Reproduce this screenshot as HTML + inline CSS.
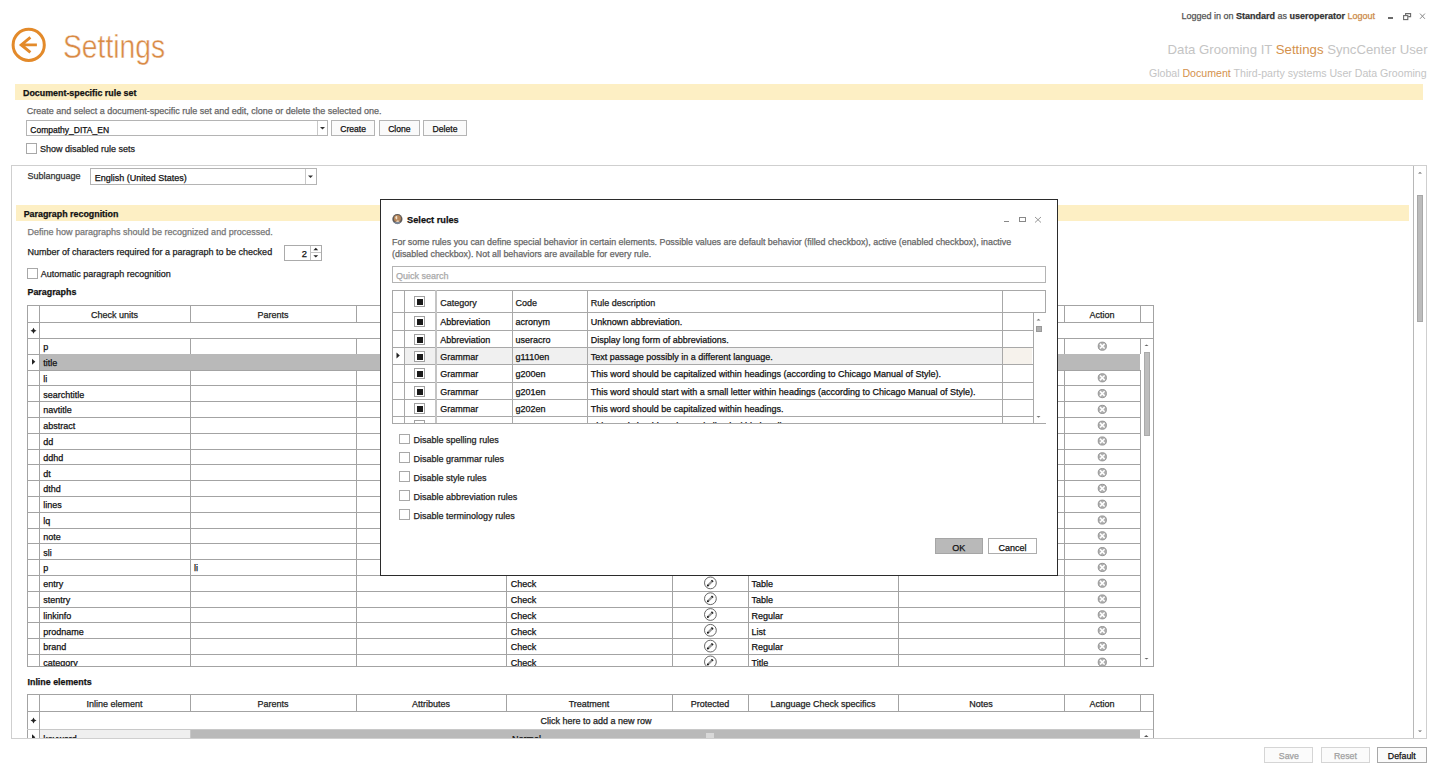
<!DOCTYPE html>
<html><head><meta charset="utf-8"><style>
html,body{margin:0;padding:0;}
body{width:1440px;height:764px;overflow:hidden;position:relative;background:#fff;font-family:"Liberation Sans",sans-serif;}
.t{position:absolute;white-space:pre;-webkit-text-stroke:0.25px currentColor;}
.r{position:absolute;box-sizing:border-box;}
svg{position:absolute;overflow:visible;}
</style></head><body>

<svg style="left:0;top:0" width="80" height="80"><circle cx="28.7" cy="44.9" r="15.6" fill="none" stroke="#e38a2a" stroke-width="3"/><path d="M21.2 44.9 H36.9 M30.4 37.4 L21.2 44.9 L30.4 52.4" fill="none" stroke="#e38a2a" stroke-width="2.9" stroke-linejoin="miter"/></svg>
<div class="t" style="left:62.50px;top:30.99px;font-size:32.5px;line-height:32.5px;font-weight:normal;color:#d98a45;transform:scaleX(0.87);transform-origin:0 0;-webkit-text-stroke:0.45px #fff;">Settings</div>
<div class="t" style="left:1181.40px;top:12.18px;font-size:9px;line-height:9px;font-weight:normal;color:#555;">Logged in on <b style="color:#333">Standard</b> as <b style="color:#333">useroperator</b> <span style="color:#cc8a48">Logout</span></div>
<div class="r" style="left:1388.00px;top:17.00px;width:5.00px;height:1.50px;background:#6a6a6a"></div>
<svg style="left:0;top:0" width="1440" height="30"><rect x="1403.6" y="15.6" width="4.2" height="4" fill="none" stroke="#6a6a6a" stroke-width="1.1"/><path d="M1405.6 15.2 V13.6 H1410.6 V16.6 H1408.2" fill="none" stroke="#6a6a6a" stroke-width="1.1"/><path d="M1420 13.6 L1424.9 18.8 M1424.9 13.6 L1420 18.8" stroke="#888" stroke-width="1"/></svg>
<div class="t" style="left:1167.60px;top:43.33px;font-size:13.2px;line-height:13.2px;font-weight:normal;color:#c4c4c4;-webkit-text-stroke:0;">Data Grooming IT <span style="color:#d4914c">Settings</span> SyncCenter User</div>
<div class="t" style="left:1148.90px;top:68.33px;font-size:10.6px;line-height:10.6px;font-weight:normal;color:#c4c4c4;-webkit-text-stroke:0;">Global <span style="color:#d4914c">Document</span> Third-party systems User Data Grooming</div>
<div class="r" style="left:15.00px;top:84.00px;width:1408.00px;height:16.00px;background:#fdefc4"></div>
<div class="t" style="left:23.00px;top:88.97px;font-size:8.9px;line-height:8.9px;font-weight:bold;color:#111;">Document-specific rule set</div>
<div class="t" style="left:26.70px;top:106.88px;font-size:9px;line-height:9px;font-weight:normal;color:#666;">Create and select a document-specific rule set and edit, clone or delete the selected one.</div>
<div class="r" style="left:26.00px;top:120.00px;width:302.00px;height:16.00px;border:1px solid #b4b4b4;background:#fff"></div>
<div class="r" style="left:316.50px;top:121.00px;width:1.00px;height:14.00px;background:#c8c8c8"></div>
<svg style="left:0;top:0" width="400" height="200"><path d="M320 127 h5 l-2.5 2.5z" fill="#333"/></svg>
<div class="t" style="left:30.30px;top:125.60px;font-size:8.5px;line-height:8.5px;font-weight:normal;color:#111;">Compathy_DITA_EN</div>
<div class="r" style="left:331.00px;top:120.00px;width:44.20px;height:16.00px;border:1px solid #b4b4b4;background:#fafafa"></div>
<div class="t" style="left:153.10px;width:400px;text-align:center;top:124.72px;font-size:8.6px;line-height:8.6px;font-weight:normal;color:#111;">Create</div>
<div class="r" style="left:379.00px;top:120.00px;width:40.80px;height:16.00px;border:1px solid #b4b4b4;background:#fafafa"></div>
<div class="t" style="left:199.40px;width:400px;text-align:center;top:124.72px;font-size:8.6px;line-height:8.6px;font-weight:normal;color:#111;">Clone</div>
<div class="r" style="left:423.00px;top:120.00px;width:44.00px;height:16.00px;border:1px solid #b4b4b4;background:#fafafa"></div>
<div class="t" style="left:245.00px;width:400px;text-align:center;top:124.72px;font-size:8.6px;line-height:8.6px;font-weight:normal;color:#111;">Delete</div>
<div class="r" style="left:26.00px;top:143.00px;width:11.00px;height:11.00px;border:1px solid #a8a8a8;background:#fff"></div>
<div class="t" style="left:40.00px;top:144.88px;font-size:9px;line-height:9px;font-weight:normal;color:#222;">Show disabled rule sets</div>
<div class="r" style="left:11.00px;top:165.00px;width:1415.50px;height:573.50px;border:1px solid #cfcfcf"></div>
<div class="r" style="left:1413.00px;top:166.00px;width:1.00px;height:572.00px;background:#b8b8b8"></div>
<div class="r" style="left:1417.00px;top:195.00px;width:6.00px;height:127.00px;background:#bcbcbc;border:1px solid #a8a8a8"></div>
<svg style="left:0;top:0" width="1440" height="764"><path d="M1418 173.5 h4 l-2 -1.6z" fill="#666"/><path d="M1418 730.5 h4 l-2 1.6z" fill="#666"/></svg>
<div class="t" style="left:27.50px;top:172.18px;font-size:9px;line-height:9px;font-weight:normal;color:#333;">Sublanguage</div>
<div class="r" style="left:90.00px;top:168.00px;width:226.50px;height:16.50px;border:1px solid #b4b4b4;background:#fff"></div>
<div class="r" style="left:304.50px;top:169.00px;width:1.00px;height:14.50px;background:#c8c8c8"></div>
<svg style="left:0;top:0" width="400" height="200"><path d="M308 175.5 h5 l-2.5 2.5z" fill="#333"/></svg>
<div class="t" style="left:94.70px;top:173.98px;font-size:9px;line-height:9px;font-weight:normal;color:#111;">English (United States)</div>
<div class="r" style="left:16.00px;top:205.00px;width:1393.00px;height:16.00px;background:#fdefc4"></div>
<div class="t" style="left:23.70px;top:209.97px;font-size:8.9px;line-height:8.9px;font-weight:bold;color:#111;">Paragraph recognition</div>
<div class="t" style="left:27.50px;top:228.18px;font-size:9px;line-height:9px;font-weight:normal;color:#777;">Define how paragraphs should be recognized and processed.</div>
<div class="t" style="left:27.50px;top:248.18px;font-size:9px;line-height:9px;font-weight:normal;color:#222;">Number of characters required for a paragraph to be checked</div>
<div class="r" style="left:284.00px;top:244.50px;width:38.00px;height:16.30px;border:1px solid #ababab;background:#fff"></div>
<div class="r" style="left:310.00px;top:245.50px;width:1.00px;height:14.50px;background:#c0c0c0"></div>
<div class="r" style="left:310.00px;top:252.00px;width:11.00px;height:1.00px;background:#c4c4c4"></div>
<svg style="left:0;top:0" width="400" height="300"><path d="M313.4 250.2 h4.8 l-2.4 -2.4z" fill="#222"/><path d="M313.4 255.2 h4.8 l-2.4 2.4z" fill="#222"/></svg>
<div class="t" style="left:301.80px;top:248.94px;font-size:9.4px;line-height:9.4px;font-weight:normal;color:#111;">2</div>
<div class="r" style="left:27.00px;top:268.00px;width:11.00px;height:11.00px;border:1px solid #a8a8a8;background:#fff"></div>
<div class="t" style="left:40.80px;top:269.88px;font-size:9px;line-height:9px;font-weight:normal;color:#222;">Automatic paragraph recognition</div>
<div class="t" style="left:27.50px;top:288.27px;font-size:8.9px;line-height:8.9px;font-weight:bold;color:#111;">Paragraphs</div>
<div class="r" style="left:27.00px;top:305.00px;width:1127.00px;height:361.50px;border:1px solid #a3a3a3;background:#fff"></div>
<div class="r" style="left:27.00px;top:322.00px;width:1126.00px;height:1.00px;background:#a3a3a3"></div>
<div class="r" style="left:27.00px;top:338.00px;width:1126.00px;height:1.00px;background:#a3a3a3"></div>
<div class="r" style="left:39.00px;top:305.00px;width:1.00px;height:17.00px;background:#a3a3a3"></div>
<div class="r" style="left:190.00px;top:305.00px;width:1.00px;height:17.00px;background:#a3a3a3"></div>
<div class="r" style="left:356.00px;top:305.00px;width:1.00px;height:17.00px;background:#a3a3a3"></div>
<div class="r" style="left:506.00px;top:305.00px;width:1.00px;height:17.00px;background:#a3a3a3"></div>
<div class="r" style="left:672.00px;top:305.00px;width:1.00px;height:17.00px;background:#a3a3a3"></div>
<div class="r" style="left:748.00px;top:305.00px;width:1.00px;height:17.00px;background:#a3a3a3"></div>
<div class="r" style="left:898.00px;top:305.00px;width:1.00px;height:17.00px;background:#a3a3a3"></div>
<div class="r" style="left:1064.00px;top:305.00px;width:1.00px;height:17.00px;background:#a3a3a3"></div>
<div class="r" style="left:1140.00px;top:305.00px;width:1.00px;height:17.00px;background:#a3a3a3"></div>
<div class="t" style="left:-85.50px;width:400px;text-align:center;top:311.18px;font-size:9px;line-height:9px;font-weight:normal;color:#222;">Check units</div>
<div class="t" style="left:73.00px;width:400px;text-align:center;top:311.18px;font-size:9px;line-height:9px;font-weight:normal;color:#222;">Parents</div>
<div class="t" style="left:231.00px;width:400px;text-align:center;top:311.18px;font-size:9px;line-height:9px;font-weight:normal;color:#222;">Attributes</div>
<div class="t" style="left:389.00px;width:400px;text-align:center;top:311.18px;font-size:9px;line-height:9px;font-weight:normal;color:#222;">Treatment</div>
<div class="t" style="left:510.00px;width:400px;text-align:center;top:311.18px;font-size:9px;line-height:9px;font-weight:normal;color:#222;">Protected</div>
<div class="t" style="left:623.00px;width:400px;text-align:center;top:311.18px;font-size:9px;line-height:9px;font-weight:normal;color:#222;">Language Check specifics</div>
<div class="t" style="left:781.00px;width:400px;text-align:center;top:311.18px;font-size:9px;line-height:9px;font-weight:normal;color:#222;">Notes</div>
<div class="t" style="left:902.00px;width:400px;text-align:center;top:311.18px;font-size:9px;line-height:9px;font-weight:normal;color:#222;">Action</div>
<div class="r" style="left:39.00px;top:322.00px;width:1.00px;height:16.00px;background:#a3a3a3"></div>
<svg style="left:0;top:0" width="1440" height="764"><path d="M33.5 327.8 Q34.1 330.2 36.5 330.8 Q34.1 331.40000000000003 33.5 333.8 Q32.9 331.40000000000003 30.5 330.8 Q32.9 330.2 33.5 327.8Z" fill="#222"/></svg>
<div style="position:absolute;left:0;top:0;width:1440px;height:764px;clip:rect(339px,1440px,665.5px,0px)">
<div class="r" style="left:39.00px;top:338.00px;width:1.00px;height:16.00px;background:#a3a3a3"></div>
<div class="r" style="left:190.00px;top:338.00px;width:1.00px;height:16.00px;background:#a3a3a3"></div>
<div class="r" style="left:356.00px;top:338.00px;width:1.00px;height:16.00px;background:#a3a3a3"></div>
<div class="r" style="left:506.00px;top:338.00px;width:1.00px;height:16.00px;background:#a3a3a3"></div>
<div class="r" style="left:672.00px;top:338.00px;width:1.00px;height:16.00px;background:#a3a3a3"></div>
<div class="r" style="left:748.00px;top:338.00px;width:1.00px;height:16.00px;background:#a3a3a3"></div>
<div class="r" style="left:898.00px;top:338.00px;width:1.00px;height:16.00px;background:#a3a3a3"></div>
<div class="r" style="left:1064.00px;top:338.00px;width:1.00px;height:16.00px;background:#a3a3a3"></div>
<div class="r" style="left:1140.00px;top:338.00px;width:1.00px;height:16.00px;background:#a3a3a3"></div>
<div class="r" style="left:27.00px;top:354.00px;width:1113.00px;height:1.00px;background:#a3a3a3"></div>
<div class="t" style="left:43.30px;top:343.28px;font-size:9px;line-height:9px;font-weight:normal;color:#111;">p</div>
<div class="t" style="left:510.80px;top:343.28px;font-size:9px;line-height:9px;font-weight:normal;color:#111;">Check</div>
<div class="t" style="left:751.50px;top:343.28px;font-size:9px;line-height:9px;font-weight:normal;color:#111;">Regular</div>
<div class="r" style="left:39.00px;top:354.00px;width:1101.00px;height:16.00px;background:#b9b9b9"></div>
<div class="r" style="left:39.00px;top:354.00px;width:1.00px;height:16.00px;background:#a3a3a3"></div>
<div class="r" style="left:27.00px;top:370.00px;width:1113.00px;height:1.00px;background:#a3a3a3"></div>
<div class="t" style="left:43.30px;top:359.08px;font-size:9px;line-height:9px;font-weight:normal;color:#111;">title</div>
<div class="r" style="left:39.00px;top:370.00px;width:1.00px;height:15.00px;background:#a3a3a3"></div>
<div class="r" style="left:190.00px;top:370.00px;width:1.00px;height:15.00px;background:#a3a3a3"></div>
<div class="r" style="left:356.00px;top:370.00px;width:1.00px;height:15.00px;background:#a3a3a3"></div>
<div class="r" style="left:506.00px;top:370.00px;width:1.00px;height:15.00px;background:#a3a3a3"></div>
<div class="r" style="left:672.00px;top:370.00px;width:1.00px;height:15.00px;background:#a3a3a3"></div>
<div class="r" style="left:748.00px;top:370.00px;width:1.00px;height:15.00px;background:#a3a3a3"></div>
<div class="r" style="left:898.00px;top:370.00px;width:1.00px;height:15.00px;background:#a3a3a3"></div>
<div class="r" style="left:1064.00px;top:370.00px;width:1.00px;height:15.00px;background:#a3a3a3"></div>
<div class="r" style="left:1140.00px;top:370.00px;width:1.00px;height:15.00px;background:#a3a3a3"></div>
<div class="r" style="left:27.00px;top:385.00px;width:1113.00px;height:1.00px;background:#a3a3a3"></div>
<div class="t" style="left:43.30px;top:374.88px;font-size:9px;line-height:9px;font-weight:normal;color:#111;">li</div>
<div class="t" style="left:510.80px;top:374.88px;font-size:9px;line-height:9px;font-weight:normal;color:#111;">Check</div>
<div class="t" style="left:751.50px;top:374.88px;font-size:9px;line-height:9px;font-weight:normal;color:#111;">Regular</div>
<div class="r" style="left:39.00px;top:385.00px;width:1.00px;height:16.00px;background:#a3a3a3"></div>
<div class="r" style="left:190.00px;top:385.00px;width:1.00px;height:16.00px;background:#a3a3a3"></div>
<div class="r" style="left:356.00px;top:385.00px;width:1.00px;height:16.00px;background:#a3a3a3"></div>
<div class="r" style="left:506.00px;top:385.00px;width:1.00px;height:16.00px;background:#a3a3a3"></div>
<div class="r" style="left:672.00px;top:385.00px;width:1.00px;height:16.00px;background:#a3a3a3"></div>
<div class="r" style="left:748.00px;top:385.00px;width:1.00px;height:16.00px;background:#a3a3a3"></div>
<div class="r" style="left:898.00px;top:385.00px;width:1.00px;height:16.00px;background:#a3a3a3"></div>
<div class="r" style="left:1064.00px;top:385.00px;width:1.00px;height:16.00px;background:#a3a3a3"></div>
<div class="r" style="left:1140.00px;top:385.00px;width:1.00px;height:16.00px;background:#a3a3a3"></div>
<div class="r" style="left:27.00px;top:401.00px;width:1113.00px;height:1.00px;background:#a3a3a3"></div>
<div class="t" style="left:43.30px;top:390.68px;font-size:9px;line-height:9px;font-weight:normal;color:#111;">searchtitle</div>
<div class="t" style="left:510.80px;top:390.68px;font-size:9px;line-height:9px;font-weight:normal;color:#111;">Check</div>
<div class="t" style="left:751.50px;top:390.68px;font-size:9px;line-height:9px;font-weight:normal;color:#111;">Regular</div>
<div class="r" style="left:39.00px;top:401.00px;width:1.00px;height:16.00px;background:#a3a3a3"></div>
<div class="r" style="left:190.00px;top:401.00px;width:1.00px;height:16.00px;background:#a3a3a3"></div>
<div class="r" style="left:356.00px;top:401.00px;width:1.00px;height:16.00px;background:#a3a3a3"></div>
<div class="r" style="left:506.00px;top:401.00px;width:1.00px;height:16.00px;background:#a3a3a3"></div>
<div class="r" style="left:672.00px;top:401.00px;width:1.00px;height:16.00px;background:#a3a3a3"></div>
<div class="r" style="left:748.00px;top:401.00px;width:1.00px;height:16.00px;background:#a3a3a3"></div>
<div class="r" style="left:898.00px;top:401.00px;width:1.00px;height:16.00px;background:#a3a3a3"></div>
<div class="r" style="left:1064.00px;top:401.00px;width:1.00px;height:16.00px;background:#a3a3a3"></div>
<div class="r" style="left:1140.00px;top:401.00px;width:1.00px;height:16.00px;background:#a3a3a3"></div>
<div class="r" style="left:27.00px;top:417.00px;width:1113.00px;height:1.00px;background:#a3a3a3"></div>
<div class="t" style="left:43.30px;top:406.48px;font-size:9px;line-height:9px;font-weight:normal;color:#111;">navtitle</div>
<div class="t" style="left:510.80px;top:406.48px;font-size:9px;line-height:9px;font-weight:normal;color:#111;">Check</div>
<div class="t" style="left:751.50px;top:406.48px;font-size:9px;line-height:9px;font-weight:normal;color:#111;">Regular</div>
<div class="r" style="left:39.00px;top:417.00px;width:1.00px;height:16.00px;background:#a3a3a3"></div>
<div class="r" style="left:190.00px;top:417.00px;width:1.00px;height:16.00px;background:#a3a3a3"></div>
<div class="r" style="left:356.00px;top:417.00px;width:1.00px;height:16.00px;background:#a3a3a3"></div>
<div class="r" style="left:506.00px;top:417.00px;width:1.00px;height:16.00px;background:#a3a3a3"></div>
<div class="r" style="left:672.00px;top:417.00px;width:1.00px;height:16.00px;background:#a3a3a3"></div>
<div class="r" style="left:748.00px;top:417.00px;width:1.00px;height:16.00px;background:#a3a3a3"></div>
<div class="r" style="left:898.00px;top:417.00px;width:1.00px;height:16.00px;background:#a3a3a3"></div>
<div class="r" style="left:1064.00px;top:417.00px;width:1.00px;height:16.00px;background:#a3a3a3"></div>
<div class="r" style="left:1140.00px;top:417.00px;width:1.00px;height:16.00px;background:#a3a3a3"></div>
<div class="r" style="left:27.00px;top:433.00px;width:1113.00px;height:1.00px;background:#a3a3a3"></div>
<div class="t" style="left:43.30px;top:422.28px;font-size:9px;line-height:9px;font-weight:normal;color:#111;">abstract</div>
<div class="t" style="left:510.80px;top:422.28px;font-size:9px;line-height:9px;font-weight:normal;color:#111;">Check</div>
<div class="t" style="left:751.50px;top:422.28px;font-size:9px;line-height:9px;font-weight:normal;color:#111;">Regular</div>
<div class="r" style="left:39.00px;top:433.00px;width:1.00px;height:16.00px;background:#a3a3a3"></div>
<div class="r" style="left:190.00px;top:433.00px;width:1.00px;height:16.00px;background:#a3a3a3"></div>
<div class="r" style="left:356.00px;top:433.00px;width:1.00px;height:16.00px;background:#a3a3a3"></div>
<div class="r" style="left:506.00px;top:433.00px;width:1.00px;height:16.00px;background:#a3a3a3"></div>
<div class="r" style="left:672.00px;top:433.00px;width:1.00px;height:16.00px;background:#a3a3a3"></div>
<div class="r" style="left:748.00px;top:433.00px;width:1.00px;height:16.00px;background:#a3a3a3"></div>
<div class="r" style="left:898.00px;top:433.00px;width:1.00px;height:16.00px;background:#a3a3a3"></div>
<div class="r" style="left:1064.00px;top:433.00px;width:1.00px;height:16.00px;background:#a3a3a3"></div>
<div class="r" style="left:1140.00px;top:433.00px;width:1.00px;height:16.00px;background:#a3a3a3"></div>
<div class="r" style="left:27.00px;top:449.00px;width:1113.00px;height:1.00px;background:#a3a3a3"></div>
<div class="t" style="left:43.30px;top:438.08px;font-size:9px;line-height:9px;font-weight:normal;color:#111;">dd</div>
<div class="t" style="left:510.80px;top:438.08px;font-size:9px;line-height:9px;font-weight:normal;color:#111;">Check</div>
<div class="t" style="left:751.50px;top:438.08px;font-size:9px;line-height:9px;font-weight:normal;color:#111;">Regular</div>
<div class="r" style="left:39.00px;top:449.00px;width:1.00px;height:15.00px;background:#a3a3a3"></div>
<div class="r" style="left:190.00px;top:449.00px;width:1.00px;height:15.00px;background:#a3a3a3"></div>
<div class="r" style="left:356.00px;top:449.00px;width:1.00px;height:15.00px;background:#a3a3a3"></div>
<div class="r" style="left:506.00px;top:449.00px;width:1.00px;height:15.00px;background:#a3a3a3"></div>
<div class="r" style="left:672.00px;top:449.00px;width:1.00px;height:15.00px;background:#a3a3a3"></div>
<div class="r" style="left:748.00px;top:449.00px;width:1.00px;height:15.00px;background:#a3a3a3"></div>
<div class="r" style="left:898.00px;top:449.00px;width:1.00px;height:15.00px;background:#a3a3a3"></div>
<div class="r" style="left:1064.00px;top:449.00px;width:1.00px;height:15.00px;background:#a3a3a3"></div>
<div class="r" style="left:1140.00px;top:449.00px;width:1.00px;height:15.00px;background:#a3a3a3"></div>
<div class="r" style="left:27.00px;top:464.00px;width:1113.00px;height:1.00px;background:#a3a3a3"></div>
<div class="t" style="left:43.30px;top:453.88px;font-size:9px;line-height:9px;font-weight:normal;color:#111;">ddhd</div>
<div class="t" style="left:510.80px;top:453.88px;font-size:9px;line-height:9px;font-weight:normal;color:#111;">Check</div>
<div class="t" style="left:751.50px;top:453.88px;font-size:9px;line-height:9px;font-weight:normal;color:#111;">Regular</div>
<div class="r" style="left:39.00px;top:464.00px;width:1.00px;height:16.00px;background:#a3a3a3"></div>
<div class="r" style="left:190.00px;top:464.00px;width:1.00px;height:16.00px;background:#a3a3a3"></div>
<div class="r" style="left:356.00px;top:464.00px;width:1.00px;height:16.00px;background:#a3a3a3"></div>
<div class="r" style="left:506.00px;top:464.00px;width:1.00px;height:16.00px;background:#a3a3a3"></div>
<div class="r" style="left:672.00px;top:464.00px;width:1.00px;height:16.00px;background:#a3a3a3"></div>
<div class="r" style="left:748.00px;top:464.00px;width:1.00px;height:16.00px;background:#a3a3a3"></div>
<div class="r" style="left:898.00px;top:464.00px;width:1.00px;height:16.00px;background:#a3a3a3"></div>
<div class="r" style="left:1064.00px;top:464.00px;width:1.00px;height:16.00px;background:#a3a3a3"></div>
<div class="r" style="left:1140.00px;top:464.00px;width:1.00px;height:16.00px;background:#a3a3a3"></div>
<div class="r" style="left:27.00px;top:480.00px;width:1113.00px;height:1.00px;background:#a3a3a3"></div>
<div class="t" style="left:43.30px;top:469.68px;font-size:9px;line-height:9px;font-weight:normal;color:#111;">dt</div>
<div class="t" style="left:510.80px;top:469.68px;font-size:9px;line-height:9px;font-weight:normal;color:#111;">Check</div>
<div class="t" style="left:751.50px;top:469.68px;font-size:9px;line-height:9px;font-weight:normal;color:#111;">Regular</div>
<div class="r" style="left:39.00px;top:480.00px;width:1.00px;height:16.00px;background:#a3a3a3"></div>
<div class="r" style="left:190.00px;top:480.00px;width:1.00px;height:16.00px;background:#a3a3a3"></div>
<div class="r" style="left:356.00px;top:480.00px;width:1.00px;height:16.00px;background:#a3a3a3"></div>
<div class="r" style="left:506.00px;top:480.00px;width:1.00px;height:16.00px;background:#a3a3a3"></div>
<div class="r" style="left:672.00px;top:480.00px;width:1.00px;height:16.00px;background:#a3a3a3"></div>
<div class="r" style="left:748.00px;top:480.00px;width:1.00px;height:16.00px;background:#a3a3a3"></div>
<div class="r" style="left:898.00px;top:480.00px;width:1.00px;height:16.00px;background:#a3a3a3"></div>
<div class="r" style="left:1064.00px;top:480.00px;width:1.00px;height:16.00px;background:#a3a3a3"></div>
<div class="r" style="left:1140.00px;top:480.00px;width:1.00px;height:16.00px;background:#a3a3a3"></div>
<div class="r" style="left:27.00px;top:496.00px;width:1113.00px;height:1.00px;background:#a3a3a3"></div>
<div class="t" style="left:43.30px;top:485.48px;font-size:9px;line-height:9px;font-weight:normal;color:#111;">dthd</div>
<div class="t" style="left:510.80px;top:485.48px;font-size:9px;line-height:9px;font-weight:normal;color:#111;">Check</div>
<div class="t" style="left:751.50px;top:485.48px;font-size:9px;line-height:9px;font-weight:normal;color:#111;">Regular</div>
<div class="r" style="left:39.00px;top:496.00px;width:1.00px;height:16.00px;background:#a3a3a3"></div>
<div class="r" style="left:190.00px;top:496.00px;width:1.00px;height:16.00px;background:#a3a3a3"></div>
<div class="r" style="left:356.00px;top:496.00px;width:1.00px;height:16.00px;background:#a3a3a3"></div>
<div class="r" style="left:506.00px;top:496.00px;width:1.00px;height:16.00px;background:#a3a3a3"></div>
<div class="r" style="left:672.00px;top:496.00px;width:1.00px;height:16.00px;background:#a3a3a3"></div>
<div class="r" style="left:748.00px;top:496.00px;width:1.00px;height:16.00px;background:#a3a3a3"></div>
<div class="r" style="left:898.00px;top:496.00px;width:1.00px;height:16.00px;background:#a3a3a3"></div>
<div class="r" style="left:1064.00px;top:496.00px;width:1.00px;height:16.00px;background:#a3a3a3"></div>
<div class="r" style="left:1140.00px;top:496.00px;width:1.00px;height:16.00px;background:#a3a3a3"></div>
<div class="r" style="left:27.00px;top:512.00px;width:1113.00px;height:1.00px;background:#a3a3a3"></div>
<div class="t" style="left:43.30px;top:501.28px;font-size:9px;line-height:9px;font-weight:normal;color:#111;">lines</div>
<div class="t" style="left:510.80px;top:501.28px;font-size:9px;line-height:9px;font-weight:normal;color:#111;">Check</div>
<div class="t" style="left:751.50px;top:501.28px;font-size:9px;line-height:9px;font-weight:normal;color:#111;">Regular</div>
<div class="r" style="left:39.00px;top:512.00px;width:1.00px;height:16.00px;background:#a3a3a3"></div>
<div class="r" style="left:190.00px;top:512.00px;width:1.00px;height:16.00px;background:#a3a3a3"></div>
<div class="r" style="left:356.00px;top:512.00px;width:1.00px;height:16.00px;background:#a3a3a3"></div>
<div class="r" style="left:506.00px;top:512.00px;width:1.00px;height:16.00px;background:#a3a3a3"></div>
<div class="r" style="left:672.00px;top:512.00px;width:1.00px;height:16.00px;background:#a3a3a3"></div>
<div class="r" style="left:748.00px;top:512.00px;width:1.00px;height:16.00px;background:#a3a3a3"></div>
<div class="r" style="left:898.00px;top:512.00px;width:1.00px;height:16.00px;background:#a3a3a3"></div>
<div class="r" style="left:1064.00px;top:512.00px;width:1.00px;height:16.00px;background:#a3a3a3"></div>
<div class="r" style="left:1140.00px;top:512.00px;width:1.00px;height:16.00px;background:#a3a3a3"></div>
<div class="r" style="left:27.00px;top:528.00px;width:1113.00px;height:1.00px;background:#a3a3a3"></div>
<div class="t" style="left:43.30px;top:517.08px;font-size:9px;line-height:9px;font-weight:normal;color:#111;">lq</div>
<div class="t" style="left:510.80px;top:517.08px;font-size:9px;line-height:9px;font-weight:normal;color:#111;">Check</div>
<div class="t" style="left:751.50px;top:517.08px;font-size:9px;line-height:9px;font-weight:normal;color:#111;">Regular</div>
<div class="r" style="left:39.00px;top:528.00px;width:1.00px;height:15.00px;background:#a3a3a3"></div>
<div class="r" style="left:190.00px;top:528.00px;width:1.00px;height:15.00px;background:#a3a3a3"></div>
<div class="r" style="left:356.00px;top:528.00px;width:1.00px;height:15.00px;background:#a3a3a3"></div>
<div class="r" style="left:506.00px;top:528.00px;width:1.00px;height:15.00px;background:#a3a3a3"></div>
<div class="r" style="left:672.00px;top:528.00px;width:1.00px;height:15.00px;background:#a3a3a3"></div>
<div class="r" style="left:748.00px;top:528.00px;width:1.00px;height:15.00px;background:#a3a3a3"></div>
<div class="r" style="left:898.00px;top:528.00px;width:1.00px;height:15.00px;background:#a3a3a3"></div>
<div class="r" style="left:1064.00px;top:528.00px;width:1.00px;height:15.00px;background:#a3a3a3"></div>
<div class="r" style="left:1140.00px;top:528.00px;width:1.00px;height:15.00px;background:#a3a3a3"></div>
<div class="r" style="left:27.00px;top:543.00px;width:1113.00px;height:1.00px;background:#a3a3a3"></div>
<div class="t" style="left:43.30px;top:532.88px;font-size:9px;line-height:9px;font-weight:normal;color:#111;">note</div>
<div class="t" style="left:510.80px;top:532.88px;font-size:9px;line-height:9px;font-weight:normal;color:#111;">Check</div>
<div class="t" style="left:751.50px;top:532.88px;font-size:9px;line-height:9px;font-weight:normal;color:#111;">Regular</div>
<div class="r" style="left:39.00px;top:543.00px;width:1.00px;height:16.00px;background:#a3a3a3"></div>
<div class="r" style="left:190.00px;top:543.00px;width:1.00px;height:16.00px;background:#a3a3a3"></div>
<div class="r" style="left:356.00px;top:543.00px;width:1.00px;height:16.00px;background:#a3a3a3"></div>
<div class="r" style="left:506.00px;top:543.00px;width:1.00px;height:16.00px;background:#a3a3a3"></div>
<div class="r" style="left:672.00px;top:543.00px;width:1.00px;height:16.00px;background:#a3a3a3"></div>
<div class="r" style="left:748.00px;top:543.00px;width:1.00px;height:16.00px;background:#a3a3a3"></div>
<div class="r" style="left:898.00px;top:543.00px;width:1.00px;height:16.00px;background:#a3a3a3"></div>
<div class="r" style="left:1064.00px;top:543.00px;width:1.00px;height:16.00px;background:#a3a3a3"></div>
<div class="r" style="left:1140.00px;top:543.00px;width:1.00px;height:16.00px;background:#a3a3a3"></div>
<div class="r" style="left:27.00px;top:559.00px;width:1113.00px;height:1.00px;background:#a3a3a3"></div>
<div class="t" style="left:43.30px;top:548.68px;font-size:9px;line-height:9px;font-weight:normal;color:#111;">sli</div>
<div class="t" style="left:510.80px;top:548.68px;font-size:9px;line-height:9px;font-weight:normal;color:#111;">Check</div>
<div class="t" style="left:751.50px;top:548.68px;font-size:9px;line-height:9px;font-weight:normal;color:#111;">Regular</div>
<div class="r" style="left:39.00px;top:559.00px;width:1.00px;height:16.00px;background:#a3a3a3"></div>
<div class="r" style="left:190.00px;top:559.00px;width:1.00px;height:16.00px;background:#a3a3a3"></div>
<div class="r" style="left:356.00px;top:559.00px;width:1.00px;height:16.00px;background:#a3a3a3"></div>
<div class="r" style="left:506.00px;top:559.00px;width:1.00px;height:16.00px;background:#a3a3a3"></div>
<div class="r" style="left:672.00px;top:559.00px;width:1.00px;height:16.00px;background:#a3a3a3"></div>
<div class="r" style="left:748.00px;top:559.00px;width:1.00px;height:16.00px;background:#a3a3a3"></div>
<div class="r" style="left:898.00px;top:559.00px;width:1.00px;height:16.00px;background:#a3a3a3"></div>
<div class="r" style="left:1064.00px;top:559.00px;width:1.00px;height:16.00px;background:#a3a3a3"></div>
<div class="r" style="left:1140.00px;top:559.00px;width:1.00px;height:16.00px;background:#a3a3a3"></div>
<div class="r" style="left:27.00px;top:575.00px;width:1113.00px;height:1.00px;background:#a3a3a3"></div>
<div class="t" style="left:43.30px;top:564.48px;font-size:9px;line-height:9px;font-weight:normal;color:#111;">p</div>
<div class="t" style="left:194.00px;top:564.48px;font-size:9px;line-height:9px;font-weight:normal;color:#111;">li</div>
<div class="t" style="left:510.80px;top:564.48px;font-size:9px;line-height:9px;font-weight:normal;color:#111;">Check</div>
<div class="t" style="left:751.50px;top:564.48px;font-size:9px;line-height:9px;font-weight:normal;color:#111;">Regular</div>
<div class="r" style="left:39.00px;top:575.00px;width:1.00px;height:16.00px;background:#a3a3a3"></div>
<div class="r" style="left:190.00px;top:575.00px;width:1.00px;height:16.00px;background:#a3a3a3"></div>
<div class="r" style="left:356.00px;top:575.00px;width:1.00px;height:16.00px;background:#a3a3a3"></div>
<div class="r" style="left:506.00px;top:575.00px;width:1.00px;height:16.00px;background:#a3a3a3"></div>
<div class="r" style="left:672.00px;top:575.00px;width:1.00px;height:16.00px;background:#a3a3a3"></div>
<div class="r" style="left:748.00px;top:575.00px;width:1.00px;height:16.00px;background:#a3a3a3"></div>
<div class="r" style="left:898.00px;top:575.00px;width:1.00px;height:16.00px;background:#a3a3a3"></div>
<div class="r" style="left:1064.00px;top:575.00px;width:1.00px;height:16.00px;background:#a3a3a3"></div>
<div class="r" style="left:1140.00px;top:575.00px;width:1.00px;height:16.00px;background:#a3a3a3"></div>
<div class="r" style="left:27.00px;top:591.00px;width:1113.00px;height:1.00px;background:#a3a3a3"></div>
<div class="t" style="left:43.30px;top:580.28px;font-size:9px;line-height:9px;font-weight:normal;color:#111;">entry</div>
<div class="t" style="left:510.80px;top:580.28px;font-size:9px;line-height:9px;font-weight:normal;color:#111;">Check</div>
<div class="t" style="left:751.50px;top:580.28px;font-size:9px;line-height:9px;font-weight:normal;color:#111;">Table</div>
<div class="r" style="left:39.00px;top:591.00px;width:1.00px;height:16.00px;background:#a3a3a3"></div>
<div class="r" style="left:190.00px;top:591.00px;width:1.00px;height:16.00px;background:#a3a3a3"></div>
<div class="r" style="left:356.00px;top:591.00px;width:1.00px;height:16.00px;background:#a3a3a3"></div>
<div class="r" style="left:506.00px;top:591.00px;width:1.00px;height:16.00px;background:#a3a3a3"></div>
<div class="r" style="left:672.00px;top:591.00px;width:1.00px;height:16.00px;background:#a3a3a3"></div>
<div class="r" style="left:748.00px;top:591.00px;width:1.00px;height:16.00px;background:#a3a3a3"></div>
<div class="r" style="left:898.00px;top:591.00px;width:1.00px;height:16.00px;background:#a3a3a3"></div>
<div class="r" style="left:1064.00px;top:591.00px;width:1.00px;height:16.00px;background:#a3a3a3"></div>
<div class="r" style="left:1140.00px;top:591.00px;width:1.00px;height:16.00px;background:#a3a3a3"></div>
<div class="r" style="left:27.00px;top:607.00px;width:1113.00px;height:1.00px;background:#a3a3a3"></div>
<div class="t" style="left:43.30px;top:596.08px;font-size:9px;line-height:9px;font-weight:normal;color:#111;">stentry</div>
<div class="t" style="left:510.80px;top:596.08px;font-size:9px;line-height:9px;font-weight:normal;color:#111;">Check</div>
<div class="t" style="left:751.50px;top:596.08px;font-size:9px;line-height:9px;font-weight:normal;color:#111;">Table</div>
<div class="r" style="left:39.00px;top:607.00px;width:1.00px;height:15.00px;background:#a3a3a3"></div>
<div class="r" style="left:190.00px;top:607.00px;width:1.00px;height:15.00px;background:#a3a3a3"></div>
<div class="r" style="left:356.00px;top:607.00px;width:1.00px;height:15.00px;background:#a3a3a3"></div>
<div class="r" style="left:506.00px;top:607.00px;width:1.00px;height:15.00px;background:#a3a3a3"></div>
<div class="r" style="left:672.00px;top:607.00px;width:1.00px;height:15.00px;background:#a3a3a3"></div>
<div class="r" style="left:748.00px;top:607.00px;width:1.00px;height:15.00px;background:#a3a3a3"></div>
<div class="r" style="left:898.00px;top:607.00px;width:1.00px;height:15.00px;background:#a3a3a3"></div>
<div class="r" style="left:1064.00px;top:607.00px;width:1.00px;height:15.00px;background:#a3a3a3"></div>
<div class="r" style="left:1140.00px;top:607.00px;width:1.00px;height:15.00px;background:#a3a3a3"></div>
<div class="r" style="left:27.00px;top:622.00px;width:1113.00px;height:1.00px;background:#a3a3a3"></div>
<div class="t" style="left:43.30px;top:611.88px;font-size:9px;line-height:9px;font-weight:normal;color:#111;">linkinfo</div>
<div class="t" style="left:510.80px;top:611.88px;font-size:9px;line-height:9px;font-weight:normal;color:#111;">Check</div>
<div class="t" style="left:751.50px;top:611.88px;font-size:9px;line-height:9px;font-weight:normal;color:#111;">Regular</div>
<div class="r" style="left:39.00px;top:622.00px;width:1.00px;height:16.00px;background:#a3a3a3"></div>
<div class="r" style="left:190.00px;top:622.00px;width:1.00px;height:16.00px;background:#a3a3a3"></div>
<div class="r" style="left:356.00px;top:622.00px;width:1.00px;height:16.00px;background:#a3a3a3"></div>
<div class="r" style="left:506.00px;top:622.00px;width:1.00px;height:16.00px;background:#a3a3a3"></div>
<div class="r" style="left:672.00px;top:622.00px;width:1.00px;height:16.00px;background:#a3a3a3"></div>
<div class="r" style="left:748.00px;top:622.00px;width:1.00px;height:16.00px;background:#a3a3a3"></div>
<div class="r" style="left:898.00px;top:622.00px;width:1.00px;height:16.00px;background:#a3a3a3"></div>
<div class="r" style="left:1064.00px;top:622.00px;width:1.00px;height:16.00px;background:#a3a3a3"></div>
<div class="r" style="left:1140.00px;top:622.00px;width:1.00px;height:16.00px;background:#a3a3a3"></div>
<div class="r" style="left:27.00px;top:638.00px;width:1113.00px;height:1.00px;background:#a3a3a3"></div>
<div class="t" style="left:43.30px;top:627.68px;font-size:9px;line-height:9px;font-weight:normal;color:#111;">prodname</div>
<div class="t" style="left:510.80px;top:627.68px;font-size:9px;line-height:9px;font-weight:normal;color:#111;">Check</div>
<div class="t" style="left:751.50px;top:627.68px;font-size:9px;line-height:9px;font-weight:normal;color:#111;">List</div>
<div class="r" style="left:39.00px;top:638.00px;width:1.00px;height:16.00px;background:#a3a3a3"></div>
<div class="r" style="left:190.00px;top:638.00px;width:1.00px;height:16.00px;background:#a3a3a3"></div>
<div class="r" style="left:356.00px;top:638.00px;width:1.00px;height:16.00px;background:#a3a3a3"></div>
<div class="r" style="left:506.00px;top:638.00px;width:1.00px;height:16.00px;background:#a3a3a3"></div>
<div class="r" style="left:672.00px;top:638.00px;width:1.00px;height:16.00px;background:#a3a3a3"></div>
<div class="r" style="left:748.00px;top:638.00px;width:1.00px;height:16.00px;background:#a3a3a3"></div>
<div class="r" style="left:898.00px;top:638.00px;width:1.00px;height:16.00px;background:#a3a3a3"></div>
<div class="r" style="left:1064.00px;top:638.00px;width:1.00px;height:16.00px;background:#a3a3a3"></div>
<div class="r" style="left:1140.00px;top:638.00px;width:1.00px;height:16.00px;background:#a3a3a3"></div>
<div class="r" style="left:27.00px;top:654.00px;width:1113.00px;height:1.00px;background:#a3a3a3"></div>
<div class="t" style="left:43.30px;top:643.48px;font-size:9px;line-height:9px;font-weight:normal;color:#111;">brand</div>
<div class="t" style="left:510.80px;top:643.48px;font-size:9px;line-height:9px;font-weight:normal;color:#111;">Check</div>
<div class="t" style="left:751.50px;top:643.48px;font-size:9px;line-height:9px;font-weight:normal;color:#111;">Regular</div>
<div class="r" style="left:39.00px;top:654.00px;width:1.00px;height:16.00px;background:#a3a3a3"></div>
<div class="r" style="left:190.00px;top:654.00px;width:1.00px;height:16.00px;background:#a3a3a3"></div>
<div class="r" style="left:356.00px;top:654.00px;width:1.00px;height:16.00px;background:#a3a3a3"></div>
<div class="r" style="left:506.00px;top:654.00px;width:1.00px;height:16.00px;background:#a3a3a3"></div>
<div class="r" style="left:672.00px;top:654.00px;width:1.00px;height:16.00px;background:#a3a3a3"></div>
<div class="r" style="left:748.00px;top:654.00px;width:1.00px;height:16.00px;background:#a3a3a3"></div>
<div class="r" style="left:898.00px;top:654.00px;width:1.00px;height:16.00px;background:#a3a3a3"></div>
<div class="r" style="left:1064.00px;top:654.00px;width:1.00px;height:16.00px;background:#a3a3a3"></div>
<div class="r" style="left:1140.00px;top:654.00px;width:1.00px;height:16.00px;background:#a3a3a3"></div>
<div class="r" style="left:27.00px;top:670.00px;width:1113.00px;height:1.00px;background:#a3a3a3"></div>
<div class="t" style="left:43.30px;top:659.28px;font-size:9px;line-height:9px;font-weight:normal;color:#111;">category</div>
<div class="t" style="left:510.80px;top:659.28px;font-size:9px;line-height:9px;font-weight:normal;color:#111;">Check</div>
<div class="t" style="left:751.50px;top:659.28px;font-size:9px;line-height:9px;font-weight:normal;color:#111;">Title</div>
<svg style="left:0;top:0" width="1440" height="764"><circle cx="710.4" cy="345.9" r="5.9" fill="none" stroke="#555" stroke-width="0.9"/><path d="M708.1 348.2 L712.6 343.7" stroke="#9a9a9a" stroke-width="2.2"/><path d="M711.8 344.5 L712.8 343.5" stroke="#222" stroke-width="2.2"/><circle cx="707.9" cy="348.4" r="1" fill="#111"/><circle cx="1102.3" cy="346.2" r="4.1" fill="#b0b0b0" stroke="#8e8e8e" stroke-width="0.9"/><path d="M1100.0 343.9 L1104.6 348.5 M1104.6 343.9 L1100.0 348.5" stroke="#fff" stroke-width="1.5"/><path d="M32.0 358.70000000000005 L35.3 361.70000000000005 L32.0 364.70000000000005Z" fill="#222"/><circle cx="710.4" cy="377.5" r="5.9" fill="none" stroke="#555" stroke-width="0.9"/><path d="M708.1 379.8 L712.6 375.3" stroke="#9a9a9a" stroke-width="2.2"/><path d="M711.8 376.1 L712.8 375.1" stroke="#222" stroke-width="2.2"/><circle cx="707.9" cy="380.0" r="1" fill="#111"/><circle cx="1102.3" cy="377.8" r="4.1" fill="#b0b0b0" stroke="#8e8e8e" stroke-width="0.9"/><path d="M1100.0 375.5 L1104.6 380.1 M1104.6 375.5 L1100.0 380.1" stroke="#fff" stroke-width="1.5"/><circle cx="710.4" cy="393.29999999999995" r="5.9" fill="none" stroke="#555" stroke-width="0.9"/><path d="M708.1 395.59999999999997 L712.6 391.09999999999997" stroke="#9a9a9a" stroke-width="2.2"/><path d="M711.8 391.9 L712.8 390.9" stroke="#222" stroke-width="2.2"/><circle cx="707.9" cy="395.79999999999995" r="1" fill="#111"/><circle cx="1102.3" cy="393.59999999999997" r="4.1" fill="#b0b0b0" stroke="#8e8e8e" stroke-width="0.9"/><path d="M1100.0 391.29999999999995 L1104.6 395.9 M1104.6 391.29999999999995 L1100.0 395.9" stroke="#fff" stroke-width="1.5"/><circle cx="710.4" cy="409.09999999999997" r="5.9" fill="none" stroke="#555" stroke-width="0.9"/><path d="M708.1 411.4 L712.6 406.9" stroke="#9a9a9a" stroke-width="2.2"/><path d="M711.8 407.7 L712.8 406.7" stroke="#222" stroke-width="2.2"/><circle cx="707.9" cy="411.59999999999997" r="1" fill="#111"/><circle cx="1102.3" cy="409.4" r="4.1" fill="#b0b0b0" stroke="#8e8e8e" stroke-width="0.9"/><path d="M1100.0 407.09999999999997 L1104.6 411.7 M1104.6 407.09999999999997 L1100.0 411.7" stroke="#fff" stroke-width="1.5"/><circle cx="710.4" cy="424.9" r="5.9" fill="none" stroke="#555" stroke-width="0.9"/><path d="M708.1 427.2 L712.6 422.7" stroke="#9a9a9a" stroke-width="2.2"/><path d="M711.8 423.5 L712.8 422.5" stroke="#222" stroke-width="2.2"/><circle cx="707.9" cy="427.4" r="1" fill="#111"/><circle cx="1102.3" cy="425.2" r="4.1" fill="#b0b0b0" stroke="#8e8e8e" stroke-width="0.9"/><path d="M1100.0 422.9 L1104.6 427.5 M1104.6 422.9 L1100.0 427.5" stroke="#fff" stroke-width="1.5"/><circle cx="710.4" cy="440.7" r="5.9" fill="none" stroke="#555" stroke-width="0.9"/><path d="M708.1 443.0 L712.6 438.5" stroke="#9a9a9a" stroke-width="2.2"/><path d="M711.8 439.3 L712.8 438.3" stroke="#222" stroke-width="2.2"/><circle cx="707.9" cy="443.2" r="1" fill="#111"/><circle cx="1102.3" cy="441.0" r="4.1" fill="#b0b0b0" stroke="#8e8e8e" stroke-width="0.9"/><path d="M1100.0 438.7 L1104.6 443.3 M1104.6 438.7 L1100.0 443.3" stroke="#fff" stroke-width="1.5"/><circle cx="710.4" cy="456.5" r="5.9" fill="none" stroke="#555" stroke-width="0.9"/><path d="M708.1 458.8 L712.6 454.3" stroke="#9a9a9a" stroke-width="2.2"/><path d="M711.8 455.1 L712.8 454.1" stroke="#222" stroke-width="2.2"/><circle cx="707.9" cy="459.0" r="1" fill="#111"/><circle cx="1102.3" cy="456.8" r="4.1" fill="#b0b0b0" stroke="#8e8e8e" stroke-width="0.9"/><path d="M1100.0 454.5 L1104.6 459.1 M1104.6 454.5 L1100.0 459.1" stroke="#fff" stroke-width="1.5"/><circle cx="710.4" cy="472.29999999999995" r="5.9" fill="none" stroke="#555" stroke-width="0.9"/><path d="M708.1 474.59999999999997 L712.6 470.09999999999997" stroke="#9a9a9a" stroke-width="2.2"/><path d="M711.8 470.9 L712.8 469.9" stroke="#222" stroke-width="2.2"/><circle cx="707.9" cy="474.79999999999995" r="1" fill="#111"/><circle cx="1102.3" cy="472.59999999999997" r="4.1" fill="#b0b0b0" stroke="#8e8e8e" stroke-width="0.9"/><path d="M1100.0 470.29999999999995 L1104.6 474.9 M1104.6 470.29999999999995 L1100.0 474.9" stroke="#fff" stroke-width="1.5"/><circle cx="710.4" cy="488.1" r="5.9" fill="none" stroke="#555" stroke-width="0.9"/><path d="M708.1 490.40000000000003 L712.6 485.90000000000003" stroke="#9a9a9a" stroke-width="2.2"/><path d="M711.8 486.70000000000005 L712.8 485.70000000000005" stroke="#222" stroke-width="2.2"/><circle cx="707.9" cy="490.6" r="1" fill="#111"/><circle cx="1102.3" cy="488.40000000000003" r="4.1" fill="#b0b0b0" stroke="#8e8e8e" stroke-width="0.9"/><path d="M1100.0 486.1 L1104.6 490.70000000000005 M1104.6 486.1 L1100.0 490.70000000000005" stroke="#fff" stroke-width="1.5"/><circle cx="710.4" cy="503.9" r="5.9" fill="none" stroke="#555" stroke-width="0.9"/><path d="M708.1 506.2 L712.6 501.7" stroke="#9a9a9a" stroke-width="2.2"/><path d="M711.8 502.5 L712.8 501.5" stroke="#222" stroke-width="2.2"/><circle cx="707.9" cy="506.4" r="1" fill="#111"/><circle cx="1102.3" cy="504.2" r="4.1" fill="#b0b0b0" stroke="#8e8e8e" stroke-width="0.9"/><path d="M1100.0 501.9 L1104.6 506.5 M1104.6 501.9 L1100.0 506.5" stroke="#fff" stroke-width="1.5"/><circle cx="710.4" cy="519.7" r="5.9" fill="none" stroke="#555" stroke-width="0.9"/><path d="M708.1 522.0 L712.6 517.5" stroke="#9a9a9a" stroke-width="2.2"/><path d="M711.8 518.3000000000001 L712.8 517.3000000000001" stroke="#222" stroke-width="2.2"/><circle cx="707.9" cy="522.2" r="1" fill="#111"/><circle cx="1102.3" cy="520.0" r="4.1" fill="#b0b0b0" stroke="#8e8e8e" stroke-width="0.9"/><path d="M1100.0 517.7 L1104.6 522.3 M1104.6 517.7 L1100.0 522.3" stroke="#fff" stroke-width="1.5"/><circle cx="710.4" cy="535.5" r="5.9" fill="none" stroke="#555" stroke-width="0.9"/><path d="M708.1 537.8 L712.6 533.3" stroke="#9a9a9a" stroke-width="2.2"/><path d="M711.8 534.1 L712.8 533.1" stroke="#222" stroke-width="2.2"/><circle cx="707.9" cy="538.0" r="1" fill="#111"/><circle cx="1102.3" cy="535.8000000000001" r="4.1" fill="#b0b0b0" stroke="#8e8e8e" stroke-width="0.9"/><path d="M1100.0 533.5000000000001 L1104.6 538.1 M1104.6 533.5000000000001 L1100.0 538.1" stroke="#fff" stroke-width="1.5"/><circle cx="710.4" cy="551.3" r="5.9" fill="none" stroke="#555" stroke-width="0.9"/><path d="M708.1 553.5999999999999 L712.6 549.0999999999999" stroke="#9a9a9a" stroke-width="2.2"/><path d="M711.8 549.9 L712.8 548.9" stroke="#222" stroke-width="2.2"/><circle cx="707.9" cy="553.8" r="1" fill="#111"/><circle cx="1102.3" cy="551.6" r="4.1" fill="#b0b0b0" stroke="#8e8e8e" stroke-width="0.9"/><path d="M1100.0 549.3000000000001 L1104.6 553.9 M1104.6 549.3000000000001 L1100.0 553.9" stroke="#fff" stroke-width="1.5"/><circle cx="710.4" cy="567.1" r="5.9" fill="none" stroke="#555" stroke-width="0.9"/><path d="M708.1 569.4 L712.6 564.9" stroke="#9a9a9a" stroke-width="2.2"/><path d="M711.8 565.7 L712.8 564.7" stroke="#222" stroke-width="2.2"/><circle cx="707.9" cy="569.6" r="1" fill="#111"/><circle cx="1102.3" cy="567.4000000000001" r="4.1" fill="#b0b0b0" stroke="#8e8e8e" stroke-width="0.9"/><path d="M1100.0 565.1000000000001 L1104.6 569.7 M1104.6 565.1000000000001 L1100.0 569.7" stroke="#fff" stroke-width="1.5"/><circle cx="710.4" cy="582.9" r="5.9" fill="none" stroke="#555" stroke-width="0.9"/><path d="M708.1 585.1999999999999 L712.6 580.6999999999999" stroke="#9a9a9a" stroke-width="2.2"/><path d="M711.8 581.5 L712.8 580.5" stroke="#222" stroke-width="2.2"/><circle cx="707.9" cy="585.4" r="1" fill="#111"/><circle cx="1102.3" cy="583.2" r="4.1" fill="#b0b0b0" stroke="#8e8e8e" stroke-width="0.9"/><path d="M1100.0 580.9000000000001 L1104.6 585.5 M1104.6 580.9000000000001 L1100.0 585.5" stroke="#fff" stroke-width="1.5"/><circle cx="710.4" cy="598.6999999999999" r="5.9" fill="none" stroke="#555" stroke-width="0.9"/><path d="M708.1 600.9999999999999 L712.6 596.4999999999999" stroke="#9a9a9a" stroke-width="2.2"/><path d="M711.8 597.3 L712.8 596.3" stroke="#222" stroke-width="2.2"/><circle cx="707.9" cy="601.1999999999999" r="1" fill="#111"/><circle cx="1102.3" cy="599.0" r="4.1" fill="#b0b0b0" stroke="#8e8e8e" stroke-width="0.9"/><path d="M1100.0 596.7 L1104.6 601.3 M1104.6 596.7 L1100.0 601.3" stroke="#fff" stroke-width="1.5"/><circle cx="710.4" cy="614.5" r="5.9" fill="none" stroke="#555" stroke-width="0.9"/><path d="M708.1 616.8 L712.6 612.3" stroke="#9a9a9a" stroke-width="2.2"/><path d="M711.8 613.1 L712.8 612.1" stroke="#222" stroke-width="2.2"/><circle cx="707.9" cy="617.0" r="1" fill="#111"/><circle cx="1102.3" cy="614.8000000000001" r="4.1" fill="#b0b0b0" stroke="#8e8e8e" stroke-width="0.9"/><path d="M1100.0 612.5000000000001 L1104.6 617.1 M1104.6 612.5000000000001 L1100.0 617.1" stroke="#fff" stroke-width="1.5"/><circle cx="710.4" cy="630.3000000000001" r="5.9" fill="none" stroke="#555" stroke-width="0.9"/><path d="M708.1 632.6 L712.6 628.1" stroke="#9a9a9a" stroke-width="2.2"/><path d="M711.8 628.9000000000001 L712.8 627.9000000000001" stroke="#222" stroke-width="2.2"/><circle cx="707.9" cy="632.8000000000001" r="1" fill="#111"/><circle cx="1102.3" cy="630.6000000000001" r="4.1" fill="#b0b0b0" stroke="#8e8e8e" stroke-width="0.9"/><path d="M1100.0 628.3000000000002 L1104.6 632.9000000000001 M1104.6 628.3000000000002 L1100.0 632.9000000000001" stroke="#fff" stroke-width="1.5"/><circle cx="710.4" cy="646.1" r="5.9" fill="none" stroke="#555" stroke-width="0.9"/><path d="M708.1 648.4 L712.6 643.9" stroke="#9a9a9a" stroke-width="2.2"/><path d="M711.8 644.7 L712.8 643.7" stroke="#222" stroke-width="2.2"/><circle cx="707.9" cy="648.6" r="1" fill="#111"/><circle cx="1102.3" cy="646.4000000000001" r="4.1" fill="#b0b0b0" stroke="#8e8e8e" stroke-width="0.9"/><path d="M1100.0 644.1000000000001 L1104.6 648.7 M1104.6 644.1000000000001 L1100.0 648.7" stroke="#fff" stroke-width="1.5"/><circle cx="710.4" cy="661.9" r="5.9" fill="none" stroke="#555" stroke-width="0.9"/><path d="M708.1 664.1999999999999 L712.6 659.6999999999999" stroke="#9a9a9a" stroke-width="2.2"/><path d="M711.8 660.5 L712.8 659.5" stroke="#222" stroke-width="2.2"/><circle cx="707.9" cy="664.4" r="1" fill="#111"/><circle cx="1102.3" cy="662.2" r="4.1" fill="#b0b0b0" stroke="#8e8e8e" stroke-width="0.9"/><path d="M1100.0 659.9000000000001 L1104.6 664.5 M1104.6 659.9000000000001 L1100.0 664.5" stroke="#fff" stroke-width="1.5"/></svg>
</div>
<svg style="left:0;top:0" width="1440" height="764"><path d="M1144.5 346 h4 l-2 -1.6z" fill="#666"/><path d="M1144.5 658 h4 l-2 1.6z" fill="#666"/></svg>
<div class="r" style="left:1144.00px;top:351.70px;width:5.70px;height:84.30px;background:#bdbdbd;border:1px solid #aaa"></div>
<div class="t" style="left:27.50px;top:678.07px;font-size:8.9px;line-height:8.9px;font-weight:bold;color:#111;">Inline elements</div>
<div style="position:absolute;left:0;top:0;width:1440px;height:764px;clip:rect(0px,1440px,738px,0px)">
<div class="r" style="left:27.00px;top:694.00px;width:1127.00px;height:60.00px;border:1px solid #a3a3a3;background:#fff"></div>
<div class="r" style="left:27.00px;top:711.00px;width:1126.00px;height:1.00px;background:#a3a3a3"></div>
<div class="r" style="left:27.00px;top:729.00px;width:1126.00px;height:1.00px;background:#c8c8c8"></div>
<div class="r" style="left:39.00px;top:694.00px;width:1.00px;height:17.00px;background:#a3a3a3"></div>
<div class="r" style="left:190.00px;top:694.00px;width:1.00px;height:17.00px;background:#a3a3a3"></div>
<div class="r" style="left:356.00px;top:694.00px;width:1.00px;height:17.00px;background:#a3a3a3"></div>
<div class="r" style="left:506.00px;top:694.00px;width:1.00px;height:17.00px;background:#a3a3a3"></div>
<div class="r" style="left:672.00px;top:694.00px;width:1.00px;height:17.00px;background:#a3a3a3"></div>
<div class="r" style="left:748.00px;top:694.00px;width:1.00px;height:17.00px;background:#a3a3a3"></div>
<div class="r" style="left:898.00px;top:694.00px;width:1.00px;height:17.00px;background:#a3a3a3"></div>
<div class="r" style="left:1064.00px;top:694.00px;width:1.00px;height:17.00px;background:#a3a3a3"></div>
<div class="r" style="left:1140.00px;top:694.00px;width:1.00px;height:17.00px;background:#a3a3a3"></div>
<div class="t" style="left:-85.50px;width:400px;text-align:center;top:700.38px;font-size:9px;line-height:9px;font-weight:normal;color:#222;">Inline element</div>
<div class="t" style="left:73.00px;width:400px;text-align:center;top:700.38px;font-size:9px;line-height:9px;font-weight:normal;color:#222;">Parents</div>
<div class="t" style="left:231.00px;width:400px;text-align:center;top:700.38px;font-size:9px;line-height:9px;font-weight:normal;color:#222;">Attributes</div>
<div class="t" style="left:389.00px;width:400px;text-align:center;top:700.38px;font-size:9px;line-height:9px;font-weight:normal;color:#222;">Treatment</div>
<div class="t" style="left:510.00px;width:400px;text-align:center;top:700.38px;font-size:9px;line-height:9px;font-weight:normal;color:#222;">Protected</div>
<div class="t" style="left:623.00px;width:400px;text-align:center;top:700.38px;font-size:9px;line-height:9px;font-weight:normal;color:#222;">Language Check specifics</div>
<div class="t" style="left:781.00px;width:400px;text-align:center;top:700.38px;font-size:9px;line-height:9px;font-weight:normal;color:#222;">Notes</div>
<div class="t" style="left:902.00px;width:400px;text-align:center;top:700.38px;font-size:9px;line-height:9px;font-weight:normal;color:#222;">Action</div>
<div class="r" style="left:39.00px;top:711.00px;width:1.00px;height:27.50px;background:#a3a3a3"></div>
<div class="t" style="left:396.00px;width:400px;text-align:center;top:716.68px;font-size:9px;line-height:9px;font-weight:normal;color:#222;">Click here to add a new row</div>
<div class="r" style="left:40.00px;top:729.50px;width:150.00px;height:10.00px;background:#efefef"></div>
<div class="r" style="left:190.00px;top:729.50px;width:950.00px;height:10.00px;background:#b9b9b9"></div>
<div class="r" style="left:190.00px;top:729.00px;width:1.00px;height:10.00px;background:#c8c8c8"></div>
<div class="t" style="left:43.30px;top:735.18px;font-size:9px;line-height:9px;font-weight:normal;color:#111;">keyword</div>
<div class="t" style="left:512.00px;top:735.18px;font-size:9px;line-height:9px;font-weight:normal;color:#111;">Normal</div>
<div class="r" style="left:706.00px;top:733.00px;width:8.00px;height:5.00px;background:#d8d8d8"></div>
<svg style="left:0;top:0" width="1440" height="764"><path d="M33.5 717.6 Q34.1 720.0 36.5 720.6 Q34.1 721.2 33.5 723.6 Q32.9 721.2 30.5 720.6 Q32.9 720.0 33.5 717.6Z" fill="#222"/><path d="M32.0 734.2 L35.3 737.2 L32.0 740.2Z" fill="#222"/><path d="M1144 737 h4.5 l-2.25 -2z" fill="#555"/></svg>
</div>
<div class="r" style="left:11.00px;top:738.00px;width:1415.50px;height:1.00px;background:#cfcfcf"></div>
<div class="r" style="left:1264.40px;top:747.30px;width:48.90px;height:15.70px;border:1px solid #d5d5d5;background:#fbfbfb"></div>
<div class="t" style="left:1088.85px;width:400px;text-align:center;top:752.35px;font-size:8.8px;line-height:8.8px;font-weight:normal;color:#a0a0a0;">Save</div>
<div class="r" style="left:1321.20px;top:747.30px;width:48.40px;height:15.70px;border:1px solid #d5d5d5;background:#fbfbfb"></div>
<div class="t" style="left:1145.40px;width:400px;text-align:center;top:752.35px;font-size:8.8px;line-height:8.8px;font-weight:normal;color:#a0a0a0;">Reset</div>
<div class="r" style="left:1377.00px;top:747.30px;width:49.50px;height:15.70px;border:1px solid #a8a8a8;background:#fbfbfb"></div>
<div class="t" style="left:1201.75px;width:400px;text-align:center;top:752.35px;font-size:8.8px;line-height:8.8px;font-weight:normal;color:#111;">Default</div>
<div class="r" style="left:380.00px;top:199.00px;width:678.00px;height:376.50px;border:1.5px solid #2b2b2b;background:#fff"></div>
<svg style="left:0;top:0" width="1440" height="764"><circle cx="397.4" cy="219" r="5.1" fill="#5e5a58"/><path d="M393.5 222 A4.6 4.6 0 0 0 401.3 222 Z" fill="#7a8595"/><circle cx="397.4" cy="218.6" r="3.5" fill="#b8875a"/><path d="M395.2 217 Q396.5 215.6 397.3 216.4 L397.2 219.6 Q395.6 219.8 395.2 217Z" fill="#f3e2cc"/><path d="M396 221.2 Q397.6 220 399.6 221 Q398.2 222.4 396 221.2Z" fill="#f6ecdc"/></svg>
<div class="t" style="left:407.10px;top:215.71px;font-size:9.2px;line-height:9.2px;font-weight:bold;color:#111;">Select rules</div>
<div class="r" style="left:1004.40px;top:221.00px;width:4.80px;height:1.00px;background:#888"></div>
<div class="r" style="left:1019.00px;top:217.00px;width:7.00px;height:5.00px;border:1px solid #888"></div>
<svg style="left:0;top:0" width="1440" height="764"><path d="M1035 217 L1041 222.5 M1041 217 L1035 222.5" stroke="#999" stroke-width="1"/></svg>
<div class="t" style="left:392.10px;top:237.99px;font-size:8.87px;line-height:8.87px;font-weight:normal;color:#666;">For some rules you can define special behavior in certain elements. Possible values are default behavior (filled checkbox), active (enabled checkbox), inactive</div>
<div class="t" style="left:392.10px;top:249.99px;font-size:8.87px;line-height:8.87px;font-weight:normal;color:#666;">(disabled checkbox). Not all behaviors are available for every rule.</div>
<div class="r" style="left:392.00px;top:266.00px;width:653.70px;height:17.00px;border:1px solid #b4b4b4;background:#fff"></div>
<div class="t" style="left:395.90px;top:272.08px;font-size:9px;line-height:9px;font-weight:normal;color:#a8a8a8;">Quick search</div>
<div class="r" style="left:392.00px;top:290.00px;width:654.00px;height:134.00px;border:1px solid #a8a8a8;background:#fff"></div>
<div class="r" style="left:392.00px;top:312.30px;width:654.00px;height:1.00px;background:#a8a8a8"></div>
<div class="r" style="left:404.00px;top:290.00px;width:1.00px;height:134.00px;background:#a8a8a8"></div>
<div class="r" style="left:512.00px;top:290.00px;width:1.00px;height:134.00px;background:#a8a8a8"></div>
<div class="r" style="left:587.00px;top:290.00px;width:1.00px;height:134.00px;background:#a8a8a8"></div>
<div class="r" style="left:1002.00px;top:290.00px;width:1.00px;height:134.00px;background:#a8a8a8"></div>
<div class="r" style="left:435.00px;top:290.00px;width:2.00px;height:134.00px;background:#c4c4c4"></div>
<div class="r" style="left:414.30px;top:296.20px;width:10.50px;height:10.50px;border:1px solid #a0a0a0;background:#fff"></div>
<div class="r" style="left:416.80px;top:299.00px;width:6.00px;height:5.60px;background:#1a1a1a"></div>
<div class="t" style="left:440.20px;top:298.78px;font-size:9px;line-height:9px;font-weight:normal;color:#222;">Category</div>
<div class="t" style="left:515.50px;top:298.78px;font-size:9px;line-height:9px;font-weight:normal;color:#222;">Code</div>
<div class="t" style="left:590.80px;top:298.78px;font-size:9px;line-height:9px;font-weight:normal;color:#222;">Rule description</div>
<div style="position:absolute;left:0;top:0;width:1440px;height:764px;clip:rect(313.3px,1440px,424px,0px)">
<div class="r" style="left:392.00px;top:330.00px;width:640.50px;height:1.00px;background:#a8a8a8"></div>
<div class="r" style="left:414.30px;top:316.20px;width:10.50px;height:10.50px;border:1px solid #a0a0a0;background:#fff"></div>
<div class="r" style="left:416.80px;top:319.00px;width:6.00px;height:5.60px;background:#1a1a1a"></div>
<div class="t" style="left:440.20px;top:317.78px;font-size:9px;line-height:9px;font-weight:normal;color:#111;">Abbreviation</div>
<div class="t" style="left:515.50px;top:317.78px;font-size:9px;line-height:9px;font-weight:normal;color:#111;">acronym</div>
<div class="t" style="left:590.80px;top:317.78px;font-size:9px;line-height:9px;font-weight:normal;color:#111;">Unknown abbreviation.</div>
<div class="r" style="left:392.00px;top:347.00px;width:640.50px;height:1.00px;background:#a8a8a8"></div>
<div class="r" style="left:414.30px;top:334.20px;width:10.50px;height:10.50px;border:1px solid #a0a0a0;background:#fff"></div>
<div class="r" style="left:416.80px;top:337.00px;width:6.00px;height:5.60px;background:#1a1a1a"></div>
<div class="t" style="left:440.20px;top:335.78px;font-size:9px;line-height:9px;font-weight:normal;color:#111;">Abbreviation</div>
<div class="t" style="left:515.50px;top:335.78px;font-size:9px;line-height:9px;font-weight:normal;color:#111;">useracro</div>
<div class="t" style="left:590.80px;top:335.78px;font-size:9px;line-height:9px;font-weight:normal;color:#111;">Display long form of abbreviations.</div>
<div class="r" style="left:404.50px;top:348.00px;width:597.90px;height:16.00px;background:#f0f0f0"></div>
<div class="r" style="left:1003.40px;top:348.00px;width:29.10px;height:16.00px;background:#f6f2ec"></div>
<div class="r" style="left:392.00px;top:364.00px;width:640.50px;height:1.00px;background:#a8a8a8"></div>
<div class="r" style="left:414.30px;top:351.20px;width:10.50px;height:10.50px;border:1px solid #a0a0a0;background:#fff"></div>
<div class="r" style="left:416.80px;top:354.00px;width:6.00px;height:5.60px;background:#1a1a1a"></div>
<div class="t" style="left:440.20px;top:352.78px;font-size:9px;line-height:9px;font-weight:normal;color:#111;">Grammar</div>
<div class="t" style="left:515.50px;top:352.78px;font-size:9px;line-height:9px;font-weight:normal;color:#111;">g1110en</div>
<div class="t" style="left:590.80px;top:352.78px;font-size:9px;line-height:9px;font-weight:normal;color:#111;">Text passage possibly in a different language.</div>
<div class="r" style="left:392.00px;top:382.00px;width:640.50px;height:1.00px;background:#a8a8a8"></div>
<div class="r" style="left:414.30px;top:368.20px;width:10.50px;height:10.50px;border:1px solid #a0a0a0;background:#fff"></div>
<div class="r" style="left:416.80px;top:371.00px;width:6.00px;height:5.60px;background:#1a1a1a"></div>
<div class="t" style="left:440.20px;top:369.78px;font-size:9px;line-height:9px;font-weight:normal;color:#111;">Grammar</div>
<div class="t" style="left:515.50px;top:369.78px;font-size:9px;line-height:9px;font-weight:normal;color:#111;">g200en</div>
<div class="t" style="left:590.80px;top:369.78px;font-size:9px;line-height:9px;font-weight:normal;color:#111;">This word should be capitalized within headings (according to Chicago Manual of Style).</div>
<div class="r" style="left:392.00px;top:399.00px;width:640.50px;height:1.00px;background:#a8a8a8"></div>
<div class="r" style="left:414.30px;top:386.20px;width:10.50px;height:10.50px;border:1px solid #a0a0a0;background:#fff"></div>
<div class="r" style="left:416.80px;top:389.00px;width:6.00px;height:5.60px;background:#1a1a1a"></div>
<div class="t" style="left:440.20px;top:387.78px;font-size:9px;line-height:9px;font-weight:normal;color:#111;">Grammar</div>
<div class="t" style="left:515.50px;top:387.78px;font-size:9px;line-height:9px;font-weight:normal;color:#111;">g201en</div>
<div class="t" style="left:590.80px;top:387.78px;font-size:9px;line-height:9px;font-weight:normal;color:#111;">This word should start with a small letter within headings (according to Chicago Manual of Style).</div>
<div class="r" style="left:392.00px;top:416.00px;width:640.50px;height:1.00px;background:#a8a8a8"></div>
<div class="r" style="left:414.30px;top:403.20px;width:10.50px;height:10.50px;border:1px solid #a0a0a0;background:#fff"></div>
<div class="r" style="left:416.80px;top:406.00px;width:6.00px;height:5.60px;background:#1a1a1a"></div>
<div class="t" style="left:440.20px;top:404.78px;font-size:9px;line-height:9px;font-weight:normal;color:#111;">Grammar</div>
<div class="t" style="left:515.50px;top:404.78px;font-size:9px;line-height:9px;font-weight:normal;color:#111;">g202en</div>
<div class="t" style="left:590.80px;top:404.78px;font-size:9px;line-height:9px;font-weight:normal;color:#111;">This word should be capitalized within headings.</div>
<div class="r" style="left:392.00px;top:433.50px;width:640.50px;height:1.00px;background:#a8a8a8"></div>
<div class="r" style="left:414.30px;top:420.20px;width:10.50px;height:10.50px;border:1px solid #a0a0a0;background:#fff"></div>
<div class="r" style="left:416.80px;top:423.00px;width:6.00px;height:5.60px;background:#1a1a1a"></div>
<div class="t" style="left:440.20px;top:421.78px;font-size:9px;line-height:9px;font-weight:normal;color:#111;">Grammar</div>
<div class="t" style="left:515.50px;top:421.78px;font-size:9px;line-height:9px;font-weight:normal;color:#111;">g203en</div>
<div class="t" style="left:590.80px;top:421.78px;font-size:9px;line-height:9px;font-weight:normal;color:#111;">This word should not be capitalized within headings.</div>
<div class="r" style="left:404.00px;top:290.00px;width:1.00px;height:134.00px;background:#a8a8a8"></div>
<div class="r" style="left:512.00px;top:290.00px;width:1.00px;height:134.00px;background:#a8a8a8"></div>
<div class="r" style="left:587.00px;top:290.00px;width:1.00px;height:134.00px;background:#a8a8a8"></div>
<div class="r" style="left:1002.00px;top:290.00px;width:1.00px;height:134.00px;background:#a8a8a8"></div>
<div class="r" style="left:435.00px;top:290.00px;width:2.00px;height:134.00px;background:#c4c4c4"></div>
<svg style="left:0;top:0" width="1440" height="764"><path d="M396.5 352.5 L399.8 355.5 L396.5 358.5Z" fill="#222"/></svg>
</div>
<div class="r" style="left:1032.50px;top:313.30px;width:13.00px;height:109.70px;background:#fff;border-left:1px solid #a8a8a8"></div>
<svg style="left:0;top:0" width="1440" height="764"><path d="M1036.5 320.5 h4 l-2 -1.8z" fill="#777"/><path d="M1036.5 416 h4 l-2 1.8z" fill="#777"/></svg>
<div class="r" style="left:1036.30px;top:326.00px;width:5.60px;height:6.00px;background:#b0b0b0;border:1px solid #999"></div>
<div class="r" style="left:392.00px;top:423.00px;width:654.00px;height:1.00px;background:#a8a8a8"></div>
<div class="r" style="left:399.20px;top:433.50px;width:10.70px;height:10.50px;border:1px solid #a8a8a8;background:#fff"></div>
<div class="t" style="left:413.60px;top:435.88px;font-size:9px;line-height:9px;font-weight:normal;color:#222;">Disable spelling rules</div>
<div class="r" style="left:399.20px;top:452.47px;width:10.70px;height:10.50px;border:1px solid #a8a8a8;background:#fff"></div>
<div class="t" style="left:413.60px;top:454.85px;font-size:9px;line-height:9px;font-weight:normal;color:#222;">Disable grammar rules</div>
<div class="r" style="left:399.20px;top:471.44px;width:10.70px;height:10.50px;border:1px solid #a8a8a8;background:#fff"></div>
<div class="t" style="left:413.60px;top:473.82px;font-size:9px;line-height:9px;font-weight:normal;color:#222;">Disable style rules</div>
<div class="r" style="left:399.20px;top:490.41px;width:10.70px;height:10.50px;border:1px solid #a8a8a8;background:#fff"></div>
<div class="t" style="left:413.60px;top:492.79px;font-size:9px;line-height:9px;font-weight:normal;color:#222;">Disable abbreviation rules</div>
<div class="r" style="left:399.20px;top:509.38px;width:10.70px;height:10.50px;border:1px solid #a8a8a8;background:#fff"></div>
<div class="t" style="left:413.60px;top:511.76px;font-size:9px;line-height:9px;font-weight:normal;color:#222;">Disable terminology rules</div>
<div class="r" style="left:934.60px;top:538.20px;width:48.30px;height:16.30px;border:1px solid #a5a5a5;background:#b9b9b9"></div>
<div class="t" style="left:758.70px;width:400px;text-align:center;top:543.68px;font-size:9px;line-height:9px;font-weight:normal;color:#111;">OK</div>
<div class="r" style="left:988.00px;top:538.20px;width:49.00px;height:16.30px;border:1px solid #adadad;background:#fff"></div>
<div class="t" style="left:812.50px;width:400px;text-align:center;top:543.68px;font-size:9px;line-height:9px;font-weight:normal;color:#111;">Cancel</div>
</body></html>
